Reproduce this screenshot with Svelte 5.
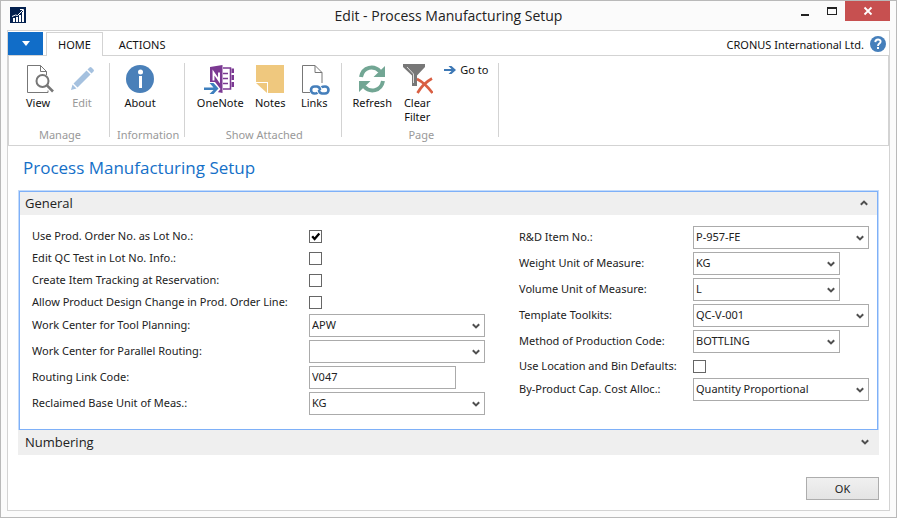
<script>
  let title = 'Process Manufacturing Setup';

  let left = $state([
    { id: 'lot', label: 'Use Prod. Order No. as Lot No.:', kind: 'check', value: true },
    { id: 'qc', label: 'Edit QC Test in Lot No. Info.:', kind: 'check', value: false },
    { id: 'track', label: 'Create Item Tracking at Reservation:', kind: 'check', value: false },
    { id: 'design', label: 'Allow Product Design Change in Prod. Order Line:', kind: 'check', value: false },
    { id: 'tool', label: 'Work Center for Tool Planning:', kind: 'select', value: 'APW' },
    { id: 'parallel', label: 'Work Center for Parallel Routing:', kind: 'select', value: '' },
    { id: 'link', label: 'Routing Link Code:', kind: 'text', value: 'V047', short: true },
    { id: 'reclaimed', label: 'Reclaimed Base Unit of Meas.:', kind: 'select', value: 'KG' }
  ]);

  let right = $state([
    { id: 'rd', label: 'R&D Item No.:', kind: 'select', value: 'P-957-FE' },
    { id: 'weight', label: 'Weight Unit of Measure:', kind: 'select', value: 'KG', short: true },
    { id: 'volume', label: 'Volume Unit of Measure:', kind: 'select', value: 'L', short: true },
    { id: 'template', label: 'Template Toolkits:', kind: 'select', value: 'QC-V-001' },
    { id: 'method', label: 'Method of Production Code:', kind: 'select', value: 'BOTTLING', short: true },
    { id: 'bin', label: 'Use Location and Bin Defaults:', kind: 'check', value: false },
    { id: 'cost', label: 'By-Product Cap. Cost Alloc.:', kind: 'select', value: 'Quantity Proportional' }
  ]);

  let generalOpen = $state(true);
</script>

{#snippet chevron(up)}
  <svg class="chevron" width="8" height="6" viewBox="0 0 8 6" aria-hidden="true">
    <path d={up ? 'M.8 4.800 4 1.600l3.200 3.200' : 'M.8 1.200 4 4.400l3.200-3.200'} fill="none" stroke="#505050" stroke-width="2" />
  </svg>
{/snippet}

{#snippet field(f)}
  <div class="row" class:check={f.kind === 'check'}>
    <label for={f.id}>{f.label}</label>
    {#if f.kind === 'check'}
      <span class="box">
        <input id={f.id} type="checkbox" bind:checked={f.value} />
        {#if f.value}
          <svg width="13" height="13" viewBox="0 0 13 13" aria-hidden="true"><path d="M3.2 6.2 5.6 9l4.700-5.500" fill="none" stroke="#000" stroke-width="2.3" /></svg>
        {/if}
      </span>
    {:else if f.kind === 'text'}
      <input class="control" class:short={f.short} id={f.id} type="text" bind:value={f.value} />
    {:else}
      <span class="combo" class:short={f.short}>
        <select class="control" id={f.id}><option>{f.value}</option></select>
        {@render chevron(false)}
      </span>
    {/if}
  </div>
{/snippet}

<div class="window">
  <header class="titlebar">
    <svg class="logo" width="16" height="16" viewBox="0 0 16 16" aria-hidden="true">
      <rect width="16" height="16" fill="#04214f" />
      <path d="M3 11h2v4H3zM6 10h2v5H6zM9 8h2v7H9zM12 5h2v10h-2z" fill="#fff" />
      <path d="M2 9.5 5.5 8l2 .5L13 3M10 2.5h3.500V6" fill="none" stroke="#fff" stroke-width="1" />
    </svg>
    <h1>Edit - {title}</h1>
    <div class="winbuttons">
      <button aria-label="Minimize"><svg width="10" height="10" viewBox="0 0 10 10"><path d="M1 8h8v2H1z" fill="#222" /></svg></button>
      <button aria-label="Maximize"><svg width="10" height="10" viewBox="0 0 10 10"><path d="M0 1h10v8H0zM1 3v5h8V3z" fill="#222" fill-rule="evenodd" /></svg></button>
      <button class="close" aria-label="Close"><svg width="10" height="10" viewBox="0 0 10 10"><path d="M1.500 1.500 8.500 8.500M8.500 1.500 1.500 8.500" stroke="#fff" stroke-width="1.8" /></svg></button>
    </div>
  </header>

  <div class="client">
    <nav class="tabs">
      <button class="menu" aria-label="Application menu"><svg width="8" height="5" viewBox="0 0 8 5"><path d="M0 0h8L4 5z" fill="#fff" /></svg></button>
      <button class="tab active">HOME</button>
      <button class="tab">ACTIONS</button>
      <span class="company">CRONUS International Ltd.</span>
      <button class="help" aria-label="Help">
        <svg width="16" height="16" viewBox="0 0 16 16"><circle cx="8" cy="8" r="8" fill="#457fbb" /><path d="M5.300 6.100C5.400 2.600 10.700 2.700 10.600 5.800 10.500 7.600 8 7.700 8 9.900" fill="none" stroke="#fff" stroke-width="1.900" /><path d="M7 11h2v2H7z" fill="#fff" /></svg>
      </button>
    </nav>

    <div class="ribbon">
      <section class="group">
        <div class="tools">
          <button class="tool">
            <svg width="32" height="32" viewBox="0 0 32 32"><path d="M5.500 2.500h13l6 6v3.500M18.500 2.500v6h6M5.500 2.500v27H26v-2" fill="none" stroke="#777" /><circle cx="20.500" cy="18" r="6" fill="#fff" stroke="#777" stroke-width="2" /><path d="m24.700 22.200 6.300 6.300" stroke="#777" stroke-width="2.600" /></svg>
            View
          </button>
          <button class="tool" disabled>
            <svg width="32" height="32" viewBox="0 0 32 32"><path d="m5 27 1.500-5.500 4 4zM7.500 20.500 20.500 7.500l4 4-13 13zM21.500 6.500l2-2q1-1 2 0l2 2q1 1 0 2l-2 2z" fill="#a5c1df" /></svg>
            Edit
          </button>
        </div>
        <h2>Manage</h2>
      </section>
      <section class="group">
        <div class="tools">
          <button class="tool medium">
            <svg width="32" height="32" viewBox="0 0 32 32"><circle cx="16" cy="16" r="14" fill="#4a80b9" /><circle cx="16.500" cy="9" r="2.500" fill="#fff" /><path d="M15 13h3v12h-3z" fill="#fff" /></svg>
            About
          </button>
        </div>
        <h2>Information</h2>
      </section>
      <section class="group">
        <div class="tools">
          <button class="tool wide">
            <svg width="32" height="32" viewBox="0 0 32 32"><path d="M6 4 18.500 2v28L12 28.800V20H6z" fill="#7b3992" /><path d="M19 5h7.500v21H19M19 10.500h5M19 15.500h5M19 20.500h5" fill="none" stroke="#7b3992" stroke-width="1.600" /><path d="M27.500 5.500H30V10h-2.500M27.500 12H30v5h-2.500M27.500 19H30v5h-2.500" fill="#7b3992" /><path d="M9.500 17.500V9.500l5.500 8V9.500" fill="none" stroke="#fff" stroke-width="1.900" /><path d="M0 23h7L4 19h7l5.500 7-5 6H4l3-3H0z" fill="#fff" /><path d="M0 24.500h9.500L5.500 20h4l5 5.500-5 5.500h-4l4-4H0z" fill="#3d7fbe" /></svg>
            OneNote
          </button>
          <button class="tool">
            <svg width="32" height="32" viewBox="0 0 32 32"><path d="M2 2h28v28H14V19H2z" fill="#efc87e" /><path d="M2 20h11v10z" fill="#efc87e" /></svg>
            Notes
          </button>
          <button class="tool">
            <svg width="32" height="32" viewBox="0 0 32 32"><path d="M12 29.500H4.500v-27H17l7 7V20M17 2.500v7h7" fill="none" stroke="#777" /><g fill="none" stroke="#457fbb" stroke-width="2.600"><path d="M19.500 29.700Q18.500 30.500 16.500 30.500a3.500 3.500 0 0 1 0-7H19q3 .5 3 3.500" /><path d="M23.500 24.300Q24.500 23.500 27 23.500a3.500 3.500 0 0 1 0 7H24q-3-.5-3-3.500" /></g></svg>
            Links
          </button>
        </div>
        <h2>Show Attached</h2>
      </section>
      <section class="group">
        <div class="tools">
          <button class="tool medium">
            <svg width="32" height="32" viewBox="0 0 32 32"><path d="M5 14C7 3.500 18 2 24 8.500M27 18C25 28.500 14 30 8 23.500" fill="none" stroke="#72a694" stroke-width="4" /><path d="M29 3v11H17.500zM3 29V18h11.500z" fill="#72a694" /></svg>
            Refresh
          </button>
          <button class="tool">
            <svg width="32" height="32" viewBox="0 0 32 32"><path d="M2 1h22v3l-8 8.500V23h-5V12.500L2 4z" fill="#777" /><path d="M6 4 12.500 11v9" fill="none" stroke="#ddd" stroke-width="1" /><path d="M16 16q8 4 15.500 14M31 15.500q-9 5-14.500 14.500" fill="none" stroke="#d95f43" stroke-width="2.600" /></svg>
            Clear<br />Filter
          </button>
          <button class="goto">
            <svg width="12" height="10" viewBox="0 0 12 10"><path d="M0 4h7.500L4.500 1h3L12 5 7.500 9h-3l3-3H0z" fill="#3d78b5" /></svg>
            Go to
          </button>
        </div>
        <h2>Page</h2>
      </section>
    </div>

    <main>
      <h2 class="pagetitle">{title}</h2>
      <section class="fasttab open">
        <button class="fasthead" aria-expanded={generalOpen} onclick={() => (generalOpen = !generalOpen)}>General {@render chevron(generalOpen)}</button>
        {#if generalOpen}
          <div class="fields">
            <div class="col first">{#each left as f (f.id)}{@render field(f)}{/each}</div>
            <div class="col second">{#each right as f (f.id)}{@render field(f)}{/each}</div>
          </div>
        {/if}
      </section>
      <section class="fasttab">
        <button class="fasthead" aria-expanded="false">Numbering {@render chevron(false)}</button>
      </section>
      <footer><button class="ok">OK</button></footer>
    </main>
  </div>
</div>

<style>
  .window {
    display: flex;
    flex-direction: column;
    min-height: 100vh;
    padding: 0 6px 6px;
    border: 1px solid #b9b9b9;
    background: #fbfbfb;
    color: #222;
    font-family: 'Noto Sans', 'Open Sans', sans-serif;
    font-size: 11px;
  }
  .window, .window * { box-sizing: border-box; }
  button, input, select { font: inherit; color: inherit; }
  button { margin: 0; padding: 0; border: 0; background: none; }
  h1, h2 { margin: 0; font-weight: 400; }
  svg { display: block; flex: none; }

  .titlebar {
    display: grid;
    grid-template-columns: 1fr auto 1fr;
    height: 29px;
  }
  .logo { margin: 6px 0 0 3px; }
  h1 { font-family: 'Open Sans', sans-serif; font-size: 14px; line-height: 30px; }
  .winbuttons { display: flex; justify-content: flex-end; height: 20px; }
  .winbuttons button { display: flex; align-items: center; justify-content: center; width: 27px; }
  .winbuttons .close { width: 45px; background: #c75050; }

  .client {
    flex: 1;
    display: flex;
    flex-direction: column;
    border: 1px solid #d3d3d3;
    background: #fff;
  }
  .tabs {
    display: flex;
    align-items: stretch;
    height: 25px;
    padding-top: 1px;
    border-bottom: 1px solid #d3d3d3;
    color: #111;
  }
  .menu { display: flex; align-items: center; justify-content: center; width: 35px; margin-right: 3px; background: #116dc8; }
  .tab { padding: 0 11px; border: 1px solid transparent; border-bottom: 0; margin-right: 4px; }
  .tab.active { border-color: #d3d3d3; background: #fff; margin-bottom: -1px; }
  .company { margin-left: auto; line-height: 26px; }
  .help { display: flex; align-items: center; margin: 0 3px 0 6px; }

  .ribbon {
    display: flex;
    height: 90px;
    padding: 7px 0 8px;
    border: 1px solid #d3d3d3;
    border-top: 0;
    color: #111;
  }
  .group {
    display: flex;
    flex-direction: column;
    justify-content: space-between;
    padding: 0 5px 0 7px;
    border-right: 1px solid #d3d3d3;
  }
  .group h2 { margin-bottom: -6px; font-size: 11px; line-height: 16px; text-align: center; color: #999; }
  .tools { display: flex; align-items: flex-start; }
  .tool {
    display: flex;
    flex-direction: column;
    align-items: center;
    width: 44px;
    line-height: 14px;
    white-space: nowrap;
  }
  .tool svg { margin-bottom: 1px; }
  .tool:disabled { color: #999; }
  .tool.medium { width: 46px; }
  .tool.wide { width: 56px; }
  .goto { display: flex; align-items: center; gap: 4px; padding: 0 5px; line-height: 14px; white-space: nowrap; }

  main { flex: 1; display: flex; flex-direction: column; padding: 0 10px 10px; }
  .pagetitle { padding-left: 5px; font-family: 'Open Sans', sans-serif; font-size: 17px; line-height: 44px; color: #1570c8; }
  .fasttab.open { border: 1px solid #7eb0f8; outline: 1px solid #c3dbfb; margin: 1px 1px 0; }
  .fasthead {
    display: flex;
    align-items: center;
    justify-content: space-between;
    width: 100%;
    height: 25px;
    padding: 0 10px 2px 7px;
    background: #efefef;
    font-family: 'Open Sans', sans-serif;
    font-size: 13px;
  }
  .open .fasthead { height: 23px; padding: 0 9px 1px 5px; }
  .fields { display: flex; padding: 11px 8px 11px 12px; }
  .col.first { flex: 1; --label: 277px; }
  .col.second { width: 350px; --label: 174px; }
  .row { display: flex; align-items: center; height: 23px; margin-bottom: 3px; }
  .row.check { height: 22px; margin: 0; padding-bottom: 2px; }
  .row label { width: var(--label); flex: none; padding-bottom: 2px; white-space: nowrap; }
  .box { position: relative; width: 13px; height: 13px; }
  .box input { appearance: none; display: block; width: 13px; height: 13px; margin: 0; border: 1px solid #666; background: #fff; }
  .box svg { position: absolute; inset: 0; pointer-events: none; }
  .control {
    appearance: none;
    width: 176px;
    height: 23px;
    margin: 0;
    padding: 0 2px 2px;
    border: 1px solid #ababab;
    border-radius: 0;
    background: #fff;
  }
  .combo { position: relative; width: 176px; }
  .combo .control { display: block; width: 100%; }
  .combo.short, .control.short { width: 147px; }
  .combo .chevron { position: absolute; right: 5px; top: 9px; pointer-events: none; }
  footer { display: flex; justify-content: flex-end; margin-top: auto; }
  .ok { width: 73px; height: 23px; border: 1px solid #adadad; background: linear-gradient(#f0f0f0, #e4e4e4); }
</style>
